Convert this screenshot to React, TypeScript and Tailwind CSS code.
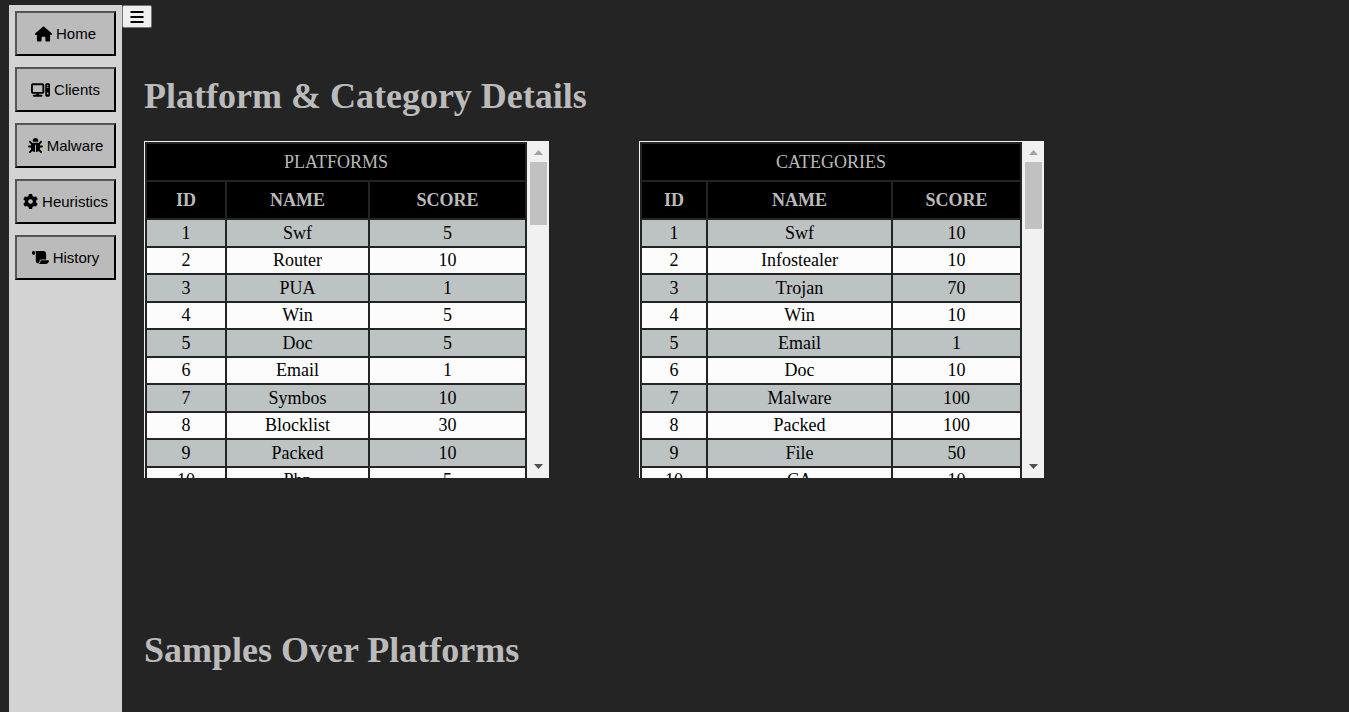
import React from "react";
import { FaBug, FaGear, FaHouse, FaScroll } from "react-icons/fa6";

type Row = [name: string, score: number];

const platforms: Row[] = [
  ["Swf", 5],
  ["Router", 10],
  ["PUA", 1],
  ["Win", 5],
  ["Doc", 5],
  ["Email", 1],
  ["Symbos", 10],
  ["Blocklist", 30],
  ["Packed", 10],
  ["Php", 5],
];

const categories: Row[] = [
  ["Swf", 10],
  ["Infostealer", 10],
  ["Trojan", 70],
  ["Win", 10],
  ["Email", 1],
  ["Doc", 10],
  ["Malware", 100],
  ["Packed", 100],
  ["File", 50],
  ["CA", 10],
];

function ComputerIcon() {
  return (
    <svg viewBox="0 0 640 512" className="h-4 w-[19px]" fill="currentColor" aria-hidden="true">
      <path d="M384 96v224H64V96h320zM64 32C28.700 32 0 60.700 0 96v224c0 35.300 28.700 64 64 64h117.300l-10.700 32H96c-17.700 0-32 14.300-32 32s14.300 32 32 32h256c17.700 0 32-14.300 32-32s-14.300-32-32-32h-74.700l-10.700-32H384c35.300 0 64-28.700 64-64V96c0-35.300-28.700-64-64-64H64zm464 0c-26.500 0-48 21.500-48 48v352c0 26.500 21.500 48 48 48h64c26.500 0 48-21.500 48-48V80c0-26.500-21.500-48-48-48h-64zm16 64h32c8.800 0 16 7.200 16 16s-7.200 16-16 16h-32c-8.800 0-16-7.200-16-16s7.200-16 16-16zm-16 80c0-8.800 7.200-16 16-16h32c8.800 0 16 7.200 16 16s-7.200 16-16 16h-32c-8.800 0-16-7.200-16-16zm32 224a32 32 0 1 1 0-64 32 32 0 1 1 0 64z" />
    </svg>
  );
}

const navItems = [
  { label: "Home", icon: <FaHouse className="h-4 w-[17px]" /> },
  { label: "Clients", icon: <ComputerIcon /> },
  { label: "Malware", icon: <FaBug className="size-[15px]" /> },
  { label: "Heuristics", icon: <FaGear className="size-[15px]" /> },
  { label: "History", icon: <FaScroll className="h-[15px] w-[17px]" /> },
];

function ScrollBar({ thumb }: { thumb: string }) {
  return (
    <div className="flex w-[22px] shrink-0 flex-col items-center bg-[#f1f1f1] pt-2 pb-[9px] pl-px" aria-hidden="true">
      <svg viewBox="0 0 9 5" className="h-[5px] w-[9px]" fill="#a3a3a3">
        <path d="M4.500 0L9 5H0z" />
      </svg>
      <div className={`mt-[7px] w-[17px] bg-[#c1c1c1] ${thumb}`} />
      <svg viewBox="0 0 9 5" className="mt-auto h-[5px] w-[9px]" fill="#505050">
        <path d="M0 0h9L4.500 5z" />
      </svg>
    </div>
  );
}

type ScoreTableProps = {
  title: string;
  rows: Row[];
  columns: [string, string, string];
  thumb: string;
};

function ScoreTable({ title, rows, columns, thumb }: ScoreTableProps) {
  return (
    <div className="flex h-[337px] w-[405px] border-t border-l border-[#f1f1f1]">
      <div className="min-w-0 flex-1 overflow-y-auto [scrollbar-width:none]">
        <table className="w-full table-fixed border-separate border-spacing-[2px] bg-[#242424] text-center text-[18px] leading-5">
          <colgroup>
            {columns.map((width, i) => (
              <col key={i} className={width} />
            ))}
          </colgroup>
          <thead className="bg-black text-[#bbbbbb]">
            <tr>
              <th colSpan={3} className="h-9 p-0 font-normal">
                {title}
              </th>
            </tr>
            <tr>
              <th className="h-9 p-0">ID</th>
              <th className="h-9 p-0">NAME</th>
              <th className="h-9 p-0">SCORE</th>
            </tr>
          </thead>
          <tbody className="text-black">
            {rows.map(([name, score], i) => {
              const cell = i % 2 === 0 ? "px-0 py-[3px]" : "px-0 pt-[2px] pb-[3px]";
              return (
                <tr key={name} className="bg-[#bdc3c3] even:bg-[#fcfcfc]">
                  <td className={cell}>{i + 1}</td>
                  <td className={cell}>{name}</td>
                  <td className={cell}>{score}</td>
                </tr>
              );
            })}
          </tbody>
        </table>
      </div>
      <ScrollBar thumb={thumb} />
    </div>
  );
}

export default function App() {
  return (
    <div className="flex min-h-screen bg-[#242424] pt-[5px] pl-[9px] font-['Liberation_Serif',serif]">
      <nav className="flex w-[113px] shrink-0 flex-col gap-[11px] bg-[#d3d3d3] p-1.5">
        {navItems.map(({ label, icon }) => (
          <button
            key={label}
            type="button"
            className="flex h-[45px] items-center justify-center gap-1 border-2 border-t-[#555555] border-r-black border-b-black border-l-[#555555] bg-[#bbbbbb] font-['Liberation_Sans',sans-serif] text-[15px] leading-5 text-black"
          >
            {icon}
            <span className="pt-px">{label}</span>
          </button>
        ))}
      </nav>
      <main className="min-w-0 flex-1">
        <button
          type="button"
          aria-label="Toggle menu"
          className="flex h-[23px] w-[30px] items-center justify-center rounded-xs border border-[#767676] bg-[#efefef] text-black"
        >
          <svg viewBox="0 0 14 12" className="h-3 w-3.5" fill="currentColor" aria-hidden="true">
            <path d="M0.500 0h13v2h-13zM0.500 5h13v2h-13zM0.500 10h13v2h-13z" />
          </svg>
        </button>
        <div className="px-[22px] pt-12 text-[#bbbbbb]">
          <h1 className="text-[36px] leading-10 font-bold">Platform &amp; Category Details</h1>
          <div className="mt-[25px] flex flex-wrap gap-x-[90px] gap-y-6">
            <ScoreTable
              title="PLATFORMS"
              rows={platforms}
              columns={["w-[78px]", "w-[141px]", "w-[155px]"]}
              thumb="h-[63px]"
            />
            <ScoreTable
              title="CATEGORIES"
              rows={categories}
              columns={["w-[64px]", "w-[183px]", "w-[127px]"]}
              thumb="h-[67px]"
            />
          </div>
          <h1 className="mt-38 text-[36px] leading-10 font-bold">Samples Over Platforms</h1>
        </div>
      </main>
    </div>
  );
}
